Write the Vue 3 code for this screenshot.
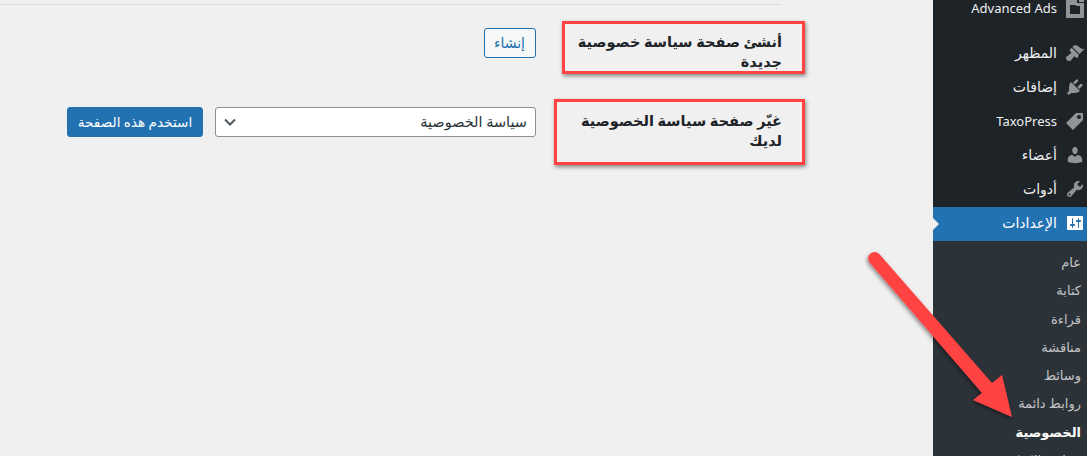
<script setup>
const menu = [
  { label: 'المظهر', icon: 'brush' },
  { label: 'إضافات', icon: 'plug' },
  { label: 'TaxoPress', icon: 'tag', latin: true },
  { label: 'أعضاء', icon: 'user' },
  { label: 'أدوات', icon: 'wrench' },
]
const sub = ['عام', 'كتابة', 'قراءة', 'مناقشة', 'وسائط', 'روابط دائمة', 'الخصوصية', 'سياسة الكوكيز']
</script>

<template>
  <div class="page" dir="rtl">
    <aside class="sidebar">
      <ul class="menu">
        <li class="item first">
          <svg class="ic" viewBox="0 0 20 20"><path fill-rule="evenodd" d="M1 0h11v5h7v15H1zM5 7v9h10V8h-4V7z"/><path d="M14 0h5v4h-5z"/></svg>
          <span class="lat">Advanced Ads</span>
        </li>
        <li v-for="m in menu" :key="m.label" class="item">
          <svg class="ic" viewBox="0 0 20 20">
            <path v-if="m.icon === 'brush'" d="M14.480 11.060L7.410 3.990l1.500-1.500c.5-.56 2.300-.47 3.510.32 1.210.8 1.430 1.280 2.910 2.100 1.180.64 2.450 1.260 4.450.85zm-.71.71L6.700 4.700 4.930 6.470c-.39.39-.39 1.020 0 1.410l1.060 1.060c.39.39.39 1.030 0 1.420-.6.6-1.430 1.110-2.210 1.690-.35.26-.7.53-1.010.84C1.430 13.230 1 14.070 1 15c0 1.660 1.340 3 3 3 .93 0 1.770-.43 2.320-1.100.31-.31.58-.66.84-1.010.58-.78 1.090-1.610 1.690-2.210.39-.39 1.030-.39 1.420 0l1.060 1.060c.39.39 1.020.39 1.410 0z"/>
            <path v-else-if="m.icon === 'plug'" d="M13.110 4.360L9.870 7.600 8 5.730l3.240-3.240c.35-.34 1.050-.2 1.560.32.52.51.66 1.210.31 1.550zm-8 1.770l.91-1.120 9.010 9.010-1.190.84c-.71.71-2.630 1.160-3.820 1.160H6.140L4.900 17.260c-.59.59-1.540.59-2.120 0-.59-.58-.59-1.530 0-2.120l1.240-1.240v-3.880c0-1.130.4-3.190 1.090-3.890zm7.260 3.970l3.240-3.240c.34-.35 1.040-.21 1.550.31.52.51.66 1.210.31 1.550l-3.240 3.250z"/>
            <path v-else-if="m.icon === 'tag'" fill-rule="evenodd" d="M11 2h7v7L8 19l-7-7zm3 6c1.100 0 2-.9 2-2s-.9-2-2-2-2 .9-2 2 .9 2 2 2z"/>
            <path v-else-if="m.icon === 'user'" d="M10 9.250c-2.270 0-2.730-3.440-2.730-3.440C7 4.020 7.820 2 9.970 2c2.160 0 2.980 2.020 2.710 3.810 0 0-.41 3.440-2.680 3.440zm0 2.570L12.720 10c2.390 0 4.520 2.330 4.520 4.530v2.490s-3.650 1.130-7.240 1.130c-3.650 0-7.240-1.130-7.240-1.130v-2.490c0-2.250 1.940-4.480 4.470-4.480z"/>
            <path v-else fill-rule="evenodd" d="M16.680 9.770c-1.340 1.340-3.300 1.670-4.950.99l-5.410 6.520c-.99.99-2.590.99-3.580 0s-.99-2.590 0-3.570l6.520-5.420c-.68-1.650-.35-3.610.99-4.950 1.280-1.280 3.120-1.620 4.720-1.060l-2.890 2.890 2.820 2.820 2.860-2.870c.53 1.580.18 3.390-1.080 4.650zM3.810 16.210c.4.39 1.040.39 1.430 0 .4-.4.4-1.040 0-1.430-.39-.4-1.030-.4-1.430 0-.39.39-.39 1.030 0 1.430z"/>
          </svg>
          <span :class="{ lat: m.latin }">{{ m.label }}</span>
        </li>
        <li class="item current">
          <svg class="ic" viewBox="0 0 20 20"><path fill="#fff" d="M18 16V4c0-.55-.45-1-1-1H3c-.55 0-1 .45-1 1v12c0 .55.45 1 1 1h14c.55 0 1-.45 1-1zM8 11h1c.55 0 1 .45 1 1s-.45 1-1 1H8v1.500c0 .28-.22.5-.5.5s-.5-.22-.5-.5V13H6c-.55 0-1-.45-1-1s.45-1 1-1h1V5.500c0-.28.22-.5.5-.5s.5.22.5.5V11zm5-2h-1c-.55 0-1-.45-1-1s.45-1 1-1h1V5.500c0-.28.22-.5.5-.5s.5.22.5.5V7h1c.55 0 1 .45 1 1s-.45 1-1 1h-1v5.500c0 .28-.22.5-.5.5s-.5-.22-.5-.5V9z"/></svg>
          <span>الإعدادات</span>
        </li>
      </ul>
      <ul class="submenu">
        <li v-for="(s, i) in sub" :key="s" :class="{ on: i === 6 }">{{ s }}</li>
      </ul>
    </aside>

    <main class="main">
      <div class="rule"></div>
      <div class="row one">
        <div class="label"><span>أنشئ صفحة سياسة خصوصية جديدة</span></div>
        <div class="field">
          <button class="btn ghost">إنشاء</button>
        </div>
      </div>
      <div class="row two">
        <div class="label"><span>غيّر صفحة سياسة الخصوصية لديك</span></div>
        <div class="field">
          <div class="select">
            <span>سياسة الخصوصية</span>
            <svg width="12" height="8" viewBox="0 0 12 8"><path d="M1 1.500l5 5 5-5" fill="none" stroke="#50575e" stroke-width="2"/></svg>
          </div>
          <button class="btn primary">استخدم هذه الصفحة</button>
        </div>
      </div>
    </main>

    <div class="note note-a"></div>
    <div class="note note-b"></div>
    <svg class="arrow" width="150" height="175" viewBox="0 0 150 175">
      <defs>
        <filter id="sh" x="-20%" y="-20%" width="140%" height="140%">
          <feDropShadow dx="-1" dy="2" stdDeviation="2" flood-color="#000" flood-opacity=".45"/>
        </filter>
      </defs>
      <path filter="url(#sh)" fill="#ff4343" d="M1.500 11.500a6.500 6.500 0 0 1 10-8.300L124 132l10-8 10 42-39-17 9-7z" />
    </svg>
  </div>
</template>

<style>
html, body { margin: 0; background: #f0f0f1; }
</style>

<style scoped>
.page {
  position: relative;
  display: flex;
  width: 1087px;
  height: 456px;
  overflow: hidden;
  background: #f0f0f1;
  font-family: Roboto, "DejaVu Sans", sans-serif;
  font-size: 13px;
  color: #1d2327;
}
.sidebar {
  width: 154px;
  flex: none;
  background: #1d2327;
  color: #f0f0f1;
}
ul { list-style: none; margin: 0; padding: 0; }
.menu { margin-top: -9px; }
.item {
  display: flex;
  align-items: center;
  height: 34px;
  font-size: 14px;
  padding-right: 2px;
  padding-bottom: 2px;
  box-sizing: border-box;
  gap: 8px;
}
.item.first { margin-bottom: 12px; padding-bottom: 0; }
.lat { font-family: "Noto Sans", sans-serif; font-size: 13px; }
.ic { width: 20px; height: 20px; fill: #8f9499; flex: none; }
.item.current { position: relative; background: #2271b1; color: #fff; }
.item.current::before {
  content: "";
  position: absolute;
  left: 0;
  top: 11px;
  border: 6px solid transparent;
  border-left: 6px solid #f0f0f1;
  border-right: 0;
}
.submenu { background: #2c3338; padding-top: 8px; color: #c3c4c7; font-size: 13px; }
.submenu li { height: 28.300px; line-height: 28px; padding-right: 6px; white-space: nowrap; }
.submenu li.on { color: #fff; font-weight: 700; }

.main { flex: 1; min-width: 0; padding-top: 4px; }
.rule { height: 1px; background: #dcdcde; width: 782px; margin-right: 151px; }
.row { display: flex; }
.label {
  flex: none;
  width: 246px;
  margin-right: 151px;
  box-sizing: border-box;
  padding-left: 36px;
  font-size: 14.500px;
  font-weight: 600;
  line-height: 20px;
}
.row.one { padding-top: 23px; }
.row.one .label { padding-top: 5px; }
.row.two { padding-top: 34px; }
.row.two .label { padding-top: 5px; }
.field { display: flex; gap: 12px; align-items: flex-start; }
.btn {
  height: 30px;
  box-sizing: border-box;
  border-radius: 3px;
  font: inherit;
  font-size: 14px;
  padding: 0 10px;
}
.ghost { width: 52px; background: #f6f7f7; border: 1px solid #2271b1; color: #2271b1; white-space: nowrap; }
.primary { width: 136px; background: #2271b1; border: 1px solid #2271b1; color: #fff; padding: 0; font-size: 13.600px; }
.select {
  width: 321px;
  height: 30px;
  box-sizing: border-box;
  background: #fff;
  border: 1px solid #8c8f94;
  border-radius: 3px;
  display: flex;
  align-items: center;
  justify-content: space-between;
  padding: 0 8px;
  color: #2c3338;
  font-size: 14.500px;
}
.note {
  position: absolute;
  box-sizing: border-box;
  border: 3px solid #ff4343;
  box-shadow: 1px 2px 4px rgba(0, 0, 0, .45);
}
.note-a { left: 562px; top: 21px; width: 243px; height: 53px; }
.note-b { left: 554px; top: 99px; width: 251px; height: 66px; }
.arrow { position: absolute; left: 868px; top: 251px; overflow: visible; }
</style>
